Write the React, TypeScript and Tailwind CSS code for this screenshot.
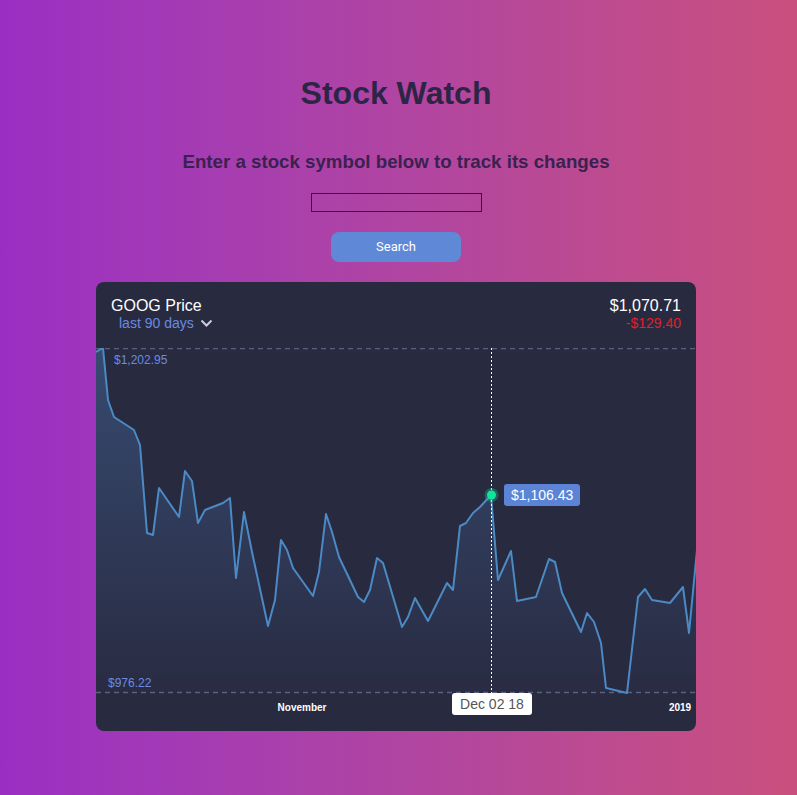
import React from "react";

const raw: [number, number][] = [
  [96, 352], [103, 348], [108, 400], [114, 417], [134, 430], [140, 445], [147, 533], [153, 535],
  [159, 488], [179, 517], [185, 471], [192, 481], [198, 523], [205, 510], [223, 503], [230, 498],
  [236, 578], [244, 512], [252, 552], [268, 626], [275, 600], [281, 540], [287, 550], [293, 568],
  [313, 596], [319, 572], [326, 514], [332, 532], [339, 557], [358, 597], [364, 602], [370, 590],
  [377, 558], [383, 563], [402, 627], [408, 617], [415, 598], [428, 621], [447, 583], [453, 590],
  [460, 526], [466, 523], [473, 513], [480, 507], [491, 495], [498, 580], [511, 551], [517, 601],
  [536, 597], [549, 559], [555, 562], [562, 593], [581, 632], [587, 613], [594, 622], [601, 643],
  [606, 688], [627, 693], [638, 597], [645, 589], [652, 600], [670, 603], [683, 587], [689, 633],
  [697, 550],
];

// page coords -> chart coords (chart starts at card x 96, y 348)
const pts = raw.map(([x, y]) => [x - 96, y - 348]);
const line = pts.map(([x, y], i) => `${i ? "L" : "M"}${x} ${y}`).join(" ");
const area = `${line} L601 344 L0 344 Z`;

function PriceChart() {
  return (
    <div className="relative h-[383px]">
      <svg width="600" height="383" className="block">
        <defs>
          <linearGradient id="fill" x1="0" y1="0" x2="0" y2="1">
            <stop offset="0%" stopColor="#4d7ab8" stopOpacity="0.4" />
            <stop offset="100%" stopColor="#4d7ab8" stopOpacity="0.02" />
          </linearGradient>
        </defs>
        <path d={area} fill="url(#fill)" />
        <line x1="0" y1="0.5" x2="600" y2="0.5" stroke="#5a6080" strokeWidth="1.3" strokeDasharray="5 4" />
        <line x1="0" y1="344.5" x2="600" y2="344.5" stroke="#5a6080" strokeWidth="1.3" strokeDasharray="5 4" />
        <path d={line} fill="none" stroke="#4b8ac4" strokeWidth="2" strokeLinejoin="round" />
        <line x1="395.5" y1="0" x2="395.5" y2="345" stroke="#ffffff" strokeDasharray="2 2" />
        <circle cx="395.5" cy="147" r="7" fill="#10c888" fillOpacity="0.35" />
        <circle cx="395.5" cy="147" r="4.5" fill="#12e39a" />
        <text x="18" y="16" fill="#6a8be0" fontSize="12">$1,202.95</text>
        <text x="12" y="339" fill="#6a8be0" fontSize="12">$976.22</text>
        <text x="206" y="363" fill="#ffffff" fontSize="10" fontWeight="bold" textAnchor="middle">November</text>
        <text x="584" y="363" fill="#ffffff" fontSize="10" fontWeight="bold" textAnchor="middle">2019</text>
      </svg>
      <div className="absolute left-[408px] top-[136px] rounded-[3px] bg-[#5b84d6] px-[7px] h-[22px] flex items-center text-[14px] text-white">
        $1,106.43
      </div>
      <div className="absolute left-[356px] top-[345px] rounded-[3px] bg-white px-[7px] h-[22px] w-[80px] flex items-center justify-center text-[14px] text-[#555]">
        Dec 02 18
      </div>
    </div>
  );
}

export default function App() {
  return (
    <div className="min-h-[795px] w-full bg-gradient-to-r from-[#9a2ec3] to-[#c94f7d] font-['Liberation_Sans',Arial,sans-serif] flex flex-col items-center pr-[5px]">
      <h1 className="mt-[75px] text-[32px] leading-[37px] font-bold text-[#2c2545]">Stock Watch</h1>
      <h2 className="mt-[39px] text-[18.72px] leading-[21px] font-bold text-[#3a2150]">
        Enter a stock symbol below to track its changes
      </h2>
      <input className="mt-[21px] w-[171px] h-[19px] border border-[#301443] bg-transparent outline-none" />
      <button className="mt-[20px] w-[130px] h-[30px] rounded-[8px] bg-[#5f88d6] text-white text-[13px] font-['Roboto',sans-serif]">
        Search
      </button>
      <div className="mt-[20px] w-[600px] h-[449px] rounded-[8px] overflow-hidden bg-[#282a40]">
        <div className="h-[66px] flex justify-between px-[15px] pt-[14px]">
          <div>
            <div className="text-[16px] leading-[19px] text-white">GOOG Price</div>
            <div className="ml-[8px] flex items-center gap-[6px] text-[14px] leading-[17px] text-[#6a8be0]">
              last 90 days
              <svg width="13" height="9" viewBox="0 0 13 9">
                <path d="M1.5 1.5 L6.5 6.5 L11.5 1.5" fill="none" stroke="#c8cde0" strokeWidth="2" />
              </svg>
            </div>
          </div>
          <div className="text-right">
            <div className="text-[16px] leading-[19px] text-white">$1,070.71</div>
            <div className="text-[14px] leading-[17px] text-[#e0202a]">-$129.40</div>
          </div>
        </div>
        <PriceChart />
      </div>
    </div>
  );
}
